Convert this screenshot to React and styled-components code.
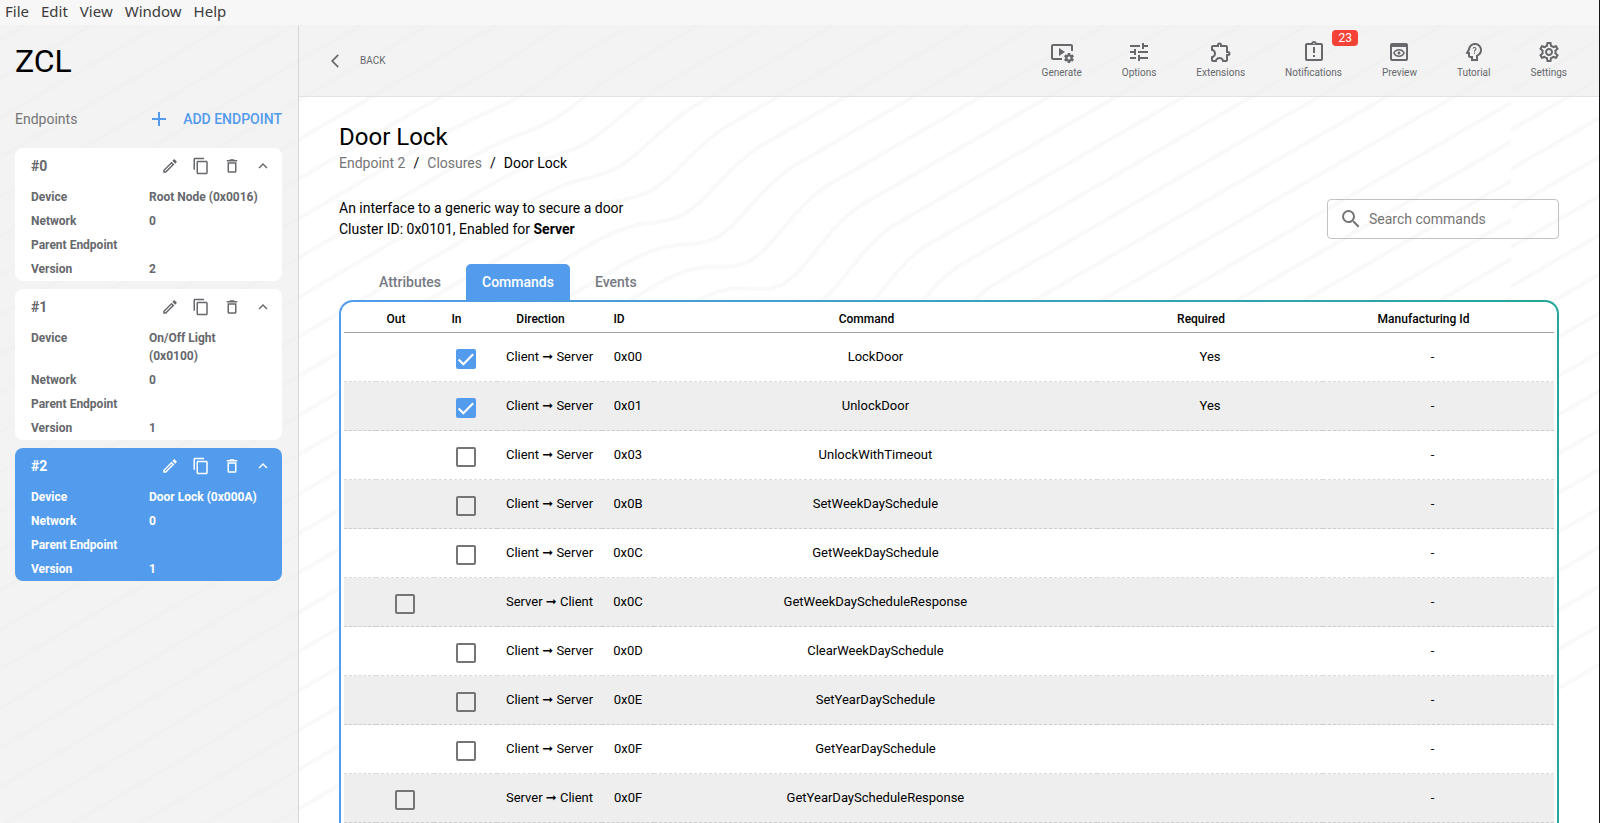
import React, { useState } from "react";
import styled, { createGlobalStyle, css } from "styled-components";
import {
  MdOutlineVideoSettings,
  MdOutlineTune,
  MdOutlineExtension,
  MdOutlineAssignmentLate,
  MdOutlinePreview,
  MdOutlinePsychologyAlt,
  MdOutlineSettings,
  MdOutlineCreate,
  MdOutlineContentCopy,
  MdDeleteOutline,
  MdExpandLess,
  MdArrowBackIosNew,
  MdAdd,
  MdSearch,
} from "react-icons/md";

const blue = "#539ced";
const teal = "#26a69a";
const ink = "#66686c";

const GlobalStyle = createGlobalStyle`
  *, *::before, *::after { box-sizing: border-box; }
  body {
    margin: 0;
    background: #fff;
    color: #000;
    font-family: Roboto, "DejaVu Sans", sans-serif;
    font-size: 14px;
  }
  button {
    margin: 0;
    padding: 0;
    border: 0;
    background: none;
    color: inherit;
    font: inherit;
    cursor: pointer;
  }
  a { color: inherit; text-decoration: none; }
  svg { display: block; flex: none; }
`;

const Shell = styled.div`
  position: relative;
  isolation: isolate;
  display: flex;
  flex-direction: column;
  min-height: 100vh;
  overflow: hidden;
  border-right: 1px solid #15151a;
`;

const Waves = styled.svg`
  position: absolute;
  z-index: -1;
  top: 0;
  left: 0;
  width: 100%;
  height: 100%;
`;

const MenuBar = styled.nav`
  display: flex;
  align-items: flex-start;
  gap: 12px;
  height: 25px;
  padding: 0 5px;
  background: #f7f7f7;
  color: #3c3c3c;
  font-family: "Noto Sans", sans-serif;
  font-size: 15px;
  line-height: 22px;
`;

const Body = styled.div`
  display: flex;
  flex: 1;
`;

const Sidebar = styled.aside`
  flex: none;
  width: 299px;
  padding: 16px 16px 16px 15px;
  border-right: 1px solid #d6d6d6;
  background: rgba(235, 235, 235, 0.6);
`;

const Brand = styled.h1`
  margin: 0;
  font-size: 32px;
  font-weight: 400;
  line-height: 40px;
`;

const EndpointsBar = styled.div`
  display: flex;
  align-items: center;
  justify-content: space-between;
  height: 32px;
  margin: 22px 0 13px;
  color: #757575;
`;

const AddButton = styled.button`
  display: flex;
  align-items: center;
  gap: 12px;
  color: ${blue};
  font-weight: 500;
`;

const CardList = styled.div`
  display: flex;
  flex-direction: column;
  gap: 8px;
`;

const Card = styled.section`
  padding: 4px 8px 0 16px;
  border-radius: 8px;
  background: ${(p) => (p.$active ? blue : "#fff")};
  color: ${(p) => (p.$active ? "#fff" : ink)};
`;

const CardHead = styled.header`
  display: flex;
  align-items: center;
  justify-content: space-between;
  height: 28px;
  margin-bottom: 5px;
`;

const CardTitle = styled.h2`
  margin: 0;
  font-size: 14px;
  font-weight: 700;
`;

const CardTools = styled.div`
  display: flex;
  gap: 13px;
  margin-right: 2px;
`;

const Facts = styled.dl`
  display: grid;
  grid-template-columns: 118px 1fr;
  margin: 0;
  font-size: 12px;
  font-weight: 700;
  line-height: 18px;
`;

const Fact = styled.dt`
  padding: 3px 0;
`;

const FactValue = styled.dd`
  margin: 0;
  padding: 3px 12px 3px 0;
`;

const Main = styled.main`
  flex: 1;
  min-width: 0;
`;

const TopBar = styled.header`
  display: flex;
  align-items: center;
  justify-content: space-between;
  height: 72px;
  padding: 0 16px 0 28px;
  border-bottom: 1px solid #e2e2e8;
  background: rgba(235, 235, 235, 0.6);
  color: ${ink};
`;

const BackButton = styled.button`
  display: flex;
  align-items: center;
  gap: 17px;
  font-size: 10px;
`;

const Tools = styled.div`
  display: flex;
  gap: 8px;
`;

const ToolButton = styled.button`
  position: relative;
  display: flex;
  flex-direction: column;
  align-items: center;
  gap: 1px;
  padding: 0 16px;
  font-size: 10px;
  line-height: 16px;
`;

const Badge = styled.span`
  position: absolute;
  top: -10px;
  right: 0;
  padding: 0 6px;
  border-radius: 4px;
  background: #f44336;
  color: #fff;
  font-size: 12px;
`;

const Content = styled.div`
  padding: 24px 40px 0;
`;

const Title = styled.h2`
  margin: 0;
  font-size: 24px;
  font-weight: 400;
  line-height: 32px;
`;

const Crumbs = styled.nav`
  display: flex;
  gap: 8px;
  color: #000;
  font-size: 14px;
  line-height: 20px;
`;

const Crumb = styled.a`
  color: ${(p) => (p.$current ? "#000" : "#757575")};
`;

const Intro = styled.div`
  display: flex;
  align-items: center;
  justify-content: space-between;
  margin: 25px 0 24px;
  font-size: 14px;
  line-height: 21px;
`;

const Description = styled.p`
  margin: 0;
`;

const SearchBox = styled.label`
  display: flex;
  align-items: center;
  gap: 6px;
  width: 232px;
  height: 40px;
  padding: 0 12px 0 11px;
  border: 1px solid #c2c2c2;
  border-radius: 4px;
  color: #757575;
`;

const SearchInput = styled.input`
  flex: 1;
  min-width: 0;
  padding: 0;
  border: 0;
  outline: 0;
  background: none;
  color: #000;
  font: inherit;
  &::placeholder { color: #757575; opacity: 1; }
`;

const Tabs = styled.div`
  display: flex;
  gap: 9px;
  padding-left: 24px;
`;

const Tab = styled.button`
  height: 36px;
  padding: 0 16px;
  border-radius: 5px 5px 0 0;
  color: #767a82;
  font-weight: 500;
  ${(p) => p.$active && css`
    background: ${blue};
    color: #fff;
  `}
`;

const Frame = styled.div`
  padding: 2px 2px 0;
  border-radius: 14px 14px 0 0;
  background: linear-gradient(to right, ${blue}, ${teal});
`;

const Panel = styled.div`
  padding: 0 3px;
  border-radius: 12px 12px 0 0;
  background: #fff;
`;

const Grid = styled.table`
  width: 100%;
  border-spacing: 0;
  table-layout: fixed;
  text-align: center;
`;

const Column = styled.col`
  width: ${(p) => p.$width};
`;

const HeadCell = styled.th`
  height: 31px;
  padding: 3px 25px 0 7px;
  border-bottom: 1px solid #a3a3a3;
  font-size: 12px;
  font-weight: 500;
  white-space: nowrap;
  &:last-child { padding-right: 37px; }
`;

const Row = styled.tr`
  &:nth-child(even) { background: #eee; }
`;

const Cell = styled.td`
  height: 49px;
  padding: 0 8px 2px;
  border-bottom: 1px dashed rgba(0, 0, 0, 0.14);
  font-size: 13px;
  white-space: nowrap;
  &:last-child { padding-right: 20px; }
`;

const CheckWrap = styled.span`
  display: inline-grid;
  place-items: center;
  width: 20px;
  height: 20px;
  margin-top: 5px;
  vertical-align: middle;
  > * { grid-area: 1 / 1; }
  svg { pointer-events: none; }
`;

const CheckInput = styled.input`
  appearance: none;
  width: 20px;
  height: 20px;
  margin: 0;
  border: 2px solid #757575;
  border-radius: 2px;
  &:checked {
    border-color: ${blue};
    background: ${blue};
  }
`;

const endpoints = [
  { id: "#0", device: "Root Node (0x0016)", network: "0", version: "2" },
  { id: "#1", device: "On/Off Light (0x0100)", network: "0", version: "1" },
  { id: "#2", device: "Door Lock (0x000A)", network: "0", version: "1" },
];

const tools = [
  { name: "Generate", Icon: MdOutlineVideoSettings },
  { name: "Options", Icon: MdOutlineTune },
  { name: "Extensions", Icon: MdOutlineExtension },
  { name: "Notifications", Icon: MdOutlineAssignmentLate, badge: 23 },
  { name: "Preview", Icon: MdOutlinePreview },
  { name: "Tutorial", Icon: MdOutlinePsychologyAlt },
  { name: "Settings", Icon: MdOutlineSettings },
];

const columns = [
  { name: "", width: "32px" },
  { name: "Out", width: "58px" },
  { name: "In", width: "63px" },
  { name: "Direction", width: "105px" },
  { name: "ID", width: "52px" },
  { name: "Command", width: "36.6%" },
  { name: "Required", width: "18.7%" },
  { name: "Manufacturing Id", width: "auto" },
];

const commands = [
  { id: "0x00", name: "LockDoor", required: true, enabled: true },
  { id: "0x01", name: "UnlockDoor", required: true, enabled: true },
  { id: "0x03", name: "UnlockWithTimeout" },
  { id: "0x0B", name: "SetWeekDaySchedule" },
  { id: "0x0C", name: "GetWeekDaySchedule" },
  { id: "0x0C", name: "GetWeekDayScheduleResponse", out: true },
  { id: "0x0D", name: "ClearWeekDaySchedule" },
  { id: "0x0E", name: "SetYearDaySchedule" },
  { id: "0x0F", name: "GetYearDaySchedule" },
  { id: "0x0F", name: "GetYearDayScheduleResponse", out: true },
];

// One contour: straight on both sides of a single bend (bend = 0 is a
// straight line).
const bendPoints = [
  [680, 310], [715, 289], [730, 288], [745, 288], [768, 291],
  [780, 290], [797, 273], [815, 255], [830, 227], [858, 207],
];
const contour = (bend) => {
  const [start, ...rest] = bendPoints.map(([x, y]) => {
    const straight = 298 - (x - 700) * 0.58;
    return `${x} ${(straight + (y - straight) * bend).toFixed(1)}`;
  });
  return `M-1620 1658 L${start} C${rest.join(" ")} L2460 -720`;
};
const steps = Array.from({ length: 50 }, (_, i) => i - 26);

// The bend flattens out toward the top left and ends at the lower right.
const bendAt = (k) => (k > 15 ? 0 : Math.max(0, Math.min(1, 1 + k / 10)));

function Backdrop() {
  return (
    <Waves aria-hidden="true">
      <defs>
        <g id="contours" fill="none" stroke="#f9f9f9" strokeWidth="4">
          {steps.map((k) => (
            <path key={k} d={contour(bendAt(k))} transform={`translate(${k * 33} ${k * 20})`} />
          ))}
        </g>
        <clipPath id="tile"><rect width="1511" height="2000" /></clipPath>
        <clipPath id="next"><rect x="1511" width="2000" height="2000" /></clipPath>
      </defs>
      <g clipPath="url(#tile)"><use href="#contours" /></g>
      <g clipPath="url(#next)"><use href="#contours" y="-12" /></g>
    </Waves>
  );
}

function Endpoint({ data, active }) {
  return (
    <Card $active={active}>
      <CardHead>
        <CardTitle>{data.id}</CardTitle>
        <CardTools>
          <button aria-label="Edit"><MdOutlineCreate size={18} /></button>
          <button aria-label="Duplicate"><MdOutlineContentCopy size={18} /></button>
          <button aria-label="Delete"><MdDeleteOutline size={18} /></button>
          <button aria-label="Collapse"><MdExpandLess size={18} /></button>
        </CardTools>
      </CardHead>
      <Facts>
        <Fact>Device</Fact>
        <FactValue>{data.device}</FactValue>
        <Fact>Network</Fact>
        <FactValue>{data.network}</FactValue>
        <Fact>Parent Endpoint</Fact>
        <FactValue />
        <Fact>Version</Fact>
        <FactValue>{data.version}</FactValue>
      </Facts>
    </Card>
  );
}

function Check({ label, initial }) {
  const [checked, setChecked] = useState(Boolean(initial));
  return (
    <CheckWrap>
      <CheckInput
        type="checkbox"
        aria-label={label}
        checked={checked}
        onChange={(e) => setChecked(e.target.checked)}
      />
      {checked && (
        <svg width="20" height="20" viewBox="0 0 24 24" fill="none" stroke="#fff" strokeWidth="2.6">
          <path d="M3.2 12.6 8.8 18.2 20.6 6.4" />
        </svg>
      )}
    </CheckWrap>
  );
}

function CommandRow({ command }) {
  const box = <Check label={`Enable ${command.name}`} initial={command.enabled} />;
  return (
    <Row>
      <Cell />
      <Cell>{command.out && box}</Cell>
      <Cell>{!command.out && box}</Cell>
      <Cell>{command.out ? "Server ➞ Client" : "Client ➞ Server"}</Cell>
      <Cell>{command.id}</Cell>
      <Cell>{command.name}</Cell>
      <Cell>{command.required && "Yes"}</Cell>
      <Cell>-</Cell>
    </Row>
  );
}

export default function App() {
  const [tab, setTab] = useState("Commands");
  return (
    <Shell>
      <GlobalStyle />
      <Backdrop />
      <MenuBar>
        {["File", "Edit", "View", "Window", "Help"].map((name) => (
          <button key={name}>{name}</button>
        ))}
      </MenuBar>
      <Body>
        <Sidebar>
          <Brand>ZCL</Brand>
          <EndpointsBar>
            <span>Endpoints</span>
            <AddButton>
              <MdAdd size={24} />
              ADD ENDPOINT
            </AddButton>
          </EndpointsBar>
          <CardList>
            {endpoints.map((e) => (
              <Endpoint key={e.id} data={e} active={e.id === "#2"} />
            ))}
          </CardList>
        </Sidebar>
        <Main>
          <TopBar>
            <BackButton>
              <MdArrowBackIosNew size={16} />
              BACK
            </BackButton>
            <Tools>
              {tools.map(({ name, Icon, badge }) => (
                <ToolButton key={name}>
                  <Icon size={24} />
                  {name}
                  {badge && <Badge>{badge}</Badge>}
                </ToolButton>
              ))}
            </Tools>
          </TopBar>
          <Content>
            <Title>Door Lock</Title>
            <Crumbs>
              <Crumb href="#endpoint">Endpoint 2</Crumb>
              <span>/</span>
              <Crumb href="#closures">Closures</Crumb>
              <span>/</span>
              <Crumb href="#door-lock" $current>Door Lock</Crumb>
            </Crumbs>
            <Intro>
              <Description>
                An interface to a generic way to secure a door
                <br />
                Cluster ID: 0x0101, Enabled for <strong>Server</strong>
              </Description>
              <SearchBox>
                <MdSearch size={24} />
                <SearchInput type="search" placeholder="Search commands" aria-label="Search commands" />
              </SearchBox>
            </Intro>
            <Tabs role="tablist">
              {["Attributes", "Commands", "Events"].map((name) => (
                <Tab
                  key={name}
                  role="tab"
                  aria-selected={tab === name}
                  $active={tab === name}
                  onClick={() => setTab(name)}
                >
                  {name}
                </Tab>
              ))}
            </Tabs>
            <Frame>
              <Panel>
                <Grid>
                  <colgroup>
                    {columns.map((c) => <Column key={c.name} $width={c.width} />)}
                  </colgroup>
                  <thead>
                    <tr>
                      {columns.map((c) => <HeadCell key={c.name}>{c.name}</HeadCell>)}
                    </tr>
                  </thead>
                  <tbody>
                    {commands.map((c) => <CommandRow key={c.name} command={c} />)}
                  </tbody>
                </Grid>
              </Panel>
            </Frame>
          </Content>
        </Main>
      </Body>
    </Shell>
  );
}
